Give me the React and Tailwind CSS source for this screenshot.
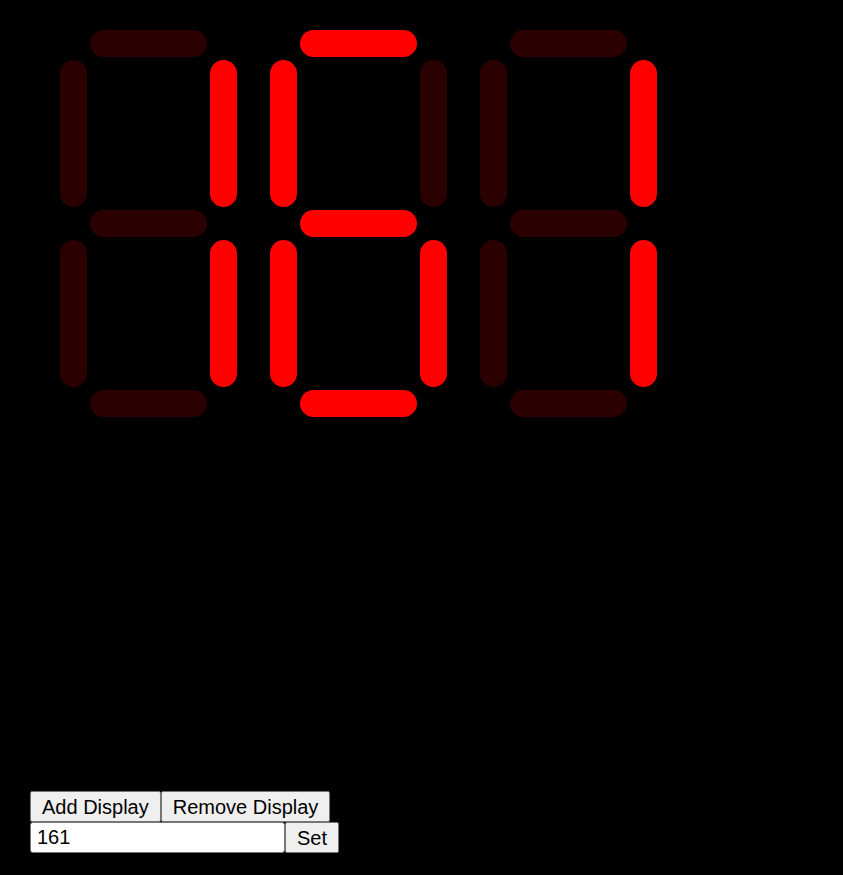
import React, { useState } from 'react';

const SEGMENTS = {
  a: { x: 30, y: 30, w: 117, h: 27 },
  b: { x: 150, y: 60, w: 27, h: 147 },
  c: { x: 150, y: 240, w: 27, h: 147 },
  d: { x: 30, y: 390, w: 117, h: 27 },
  e: { x: 0, y: 240, w: 27, h: 147 },
  f: { x: 0, y: 60, w: 27, h: 147 },
  g: { x: 30, y: 210, w: 117, h: 27 },
};

const DIGITS = {
  0: 'abcdef',
  1: 'bc',
  2: 'abdeg',
  3: 'abcdg',
  4: 'bcfg',
  5: 'acdfg',
  6: 'acdefg',
  7: 'abc',
  8: 'abcdefg',
  9: 'abcdfg',
};

const Digit = ({ value }) => {
  const on = DIGITS[value] || '';
  return (
    <svg width="210" height="420" viewBox="0 0 210 420" className="shrink-0">
      {Object.entries(SEGMENTS).map(([key, s]) => (
        <rect
          key={key}
          x={s.x}
          y={s.y}
          width={s.w}
          height={s.h}
          rx={13.5}
          fill={on.includes(key) ? '#ff0000' : '#2a0000'}
        />
      ))}
    </svg>
  );
};

const App = () => {
  const [text, setText] = useState('161');

  return (
    <div className="min-h-screen bg-black pl-[30px] font-['Liberation_Sans',Arial,sans-serif] text-[20px]">
      <div className="flex pl-[30px] h-[791px]">
        {text.split('').map((ch, i) => (
          <Digit key={i} value={ch} />
        ))}
      </div>
      <div className="flex">
        <button className="h-[31px] px-[11px] bg-[#efefef] text-black border border-[#767676] rounded-[2px] leading-none">
          Add Display
        </button>
        <button className="h-[31px] px-[11px] bg-[#efefef] text-black border border-[#767676] rounded-[2px] leading-none">
          Remove Display
        </button>
      </div>
      <div className="flex">
        <input
          value={text}
          onChange={(e) => setText(e.target.value)}
          className="w-[255px] h-[31px] px-[6px] bg-white text-black border border-[#767676] rounded-[3px] outline-none"
        />
        <button className="h-[31px] px-[11px] bg-[#efefef] text-black border border-[#767676] rounded-[2px] leading-none">
          Set
        </button>
      </div>
    </div>
  );
};

export default App;
